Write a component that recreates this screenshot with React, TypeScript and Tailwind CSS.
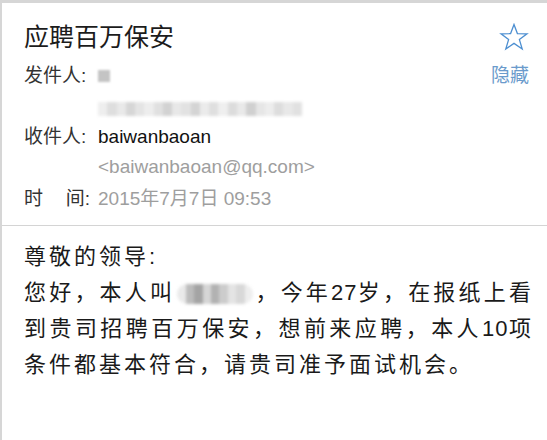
import React from 'react';

const cjk = "font-['Liberation_Sans','Noto_Sans_CJK_SC',sans-serif]";

// 打码块：一串灰色小方块再整体模糊
function Mosaic({ cells, className }: { cells: string[]; className: string }) {
  return (
    <span className={`inline-flex overflow-hidden align-middle blur-[1.5px] ${className}`}>
      {cells.map((c, i) => <span key={i} className="h-full flex-1" style={{ backgroundColor: c }} />)}
    </span>
  );
}

function StarIcon() {
  return (
    <svg width="30" height="28" viewBox="0 0 30 28" fill="none" stroke="#4d8fd1" strokeWidth="1.3" strokeLinejoin="miter">
      <polygon points="15,1.5 18.4,10.6 28,10.8 20.4,16.6 23.2,26 15,20.4 6.8,26 9.6,16.6 2,10.8 11.6,10.6" />
    </svg>
  );
}

const emailCells = ['#eeeeee', '#dedede', '#e9e9e9', '#d6d6d6', '#e4e4e4', '#ededed', '#e0e0e0', '#d2d2d2', '#e8e8e8', '#e2e2e2', '#d4d4d4', '#ebebeb', '#dfdfdf', '#efefef', '#dcdcdc', '#e9e9e9', '#d0d0d0', '#e6e6e6', '#ededed', '#dddddd', '#e8e8e8', '#e1e1e1'];
const nameCells = ['#eaeaea', '#bcbcbc', '#a4a4a4', '#d6d6d6', '#b2b2b2', '#cccccc', '#e4e4e4', '#d8d8d8', '#eeeeee'];

const Num = ({ children }: { children: string }) => <span className="tracking-[1px]">{children}</span>;

export default function App() {
  return (
    <div className={`h-[440px] w-[547px] overflow-hidden border-l-2 border-t-[3px] border-[#d6d6d6] bg-white ${cjk}`}>
      {/* 邮件头 */}
      <div className="pl-[22px] pr-[18px] pt-[19px]">
        <div className="flex h-[30px] items-center justify-between">
          <h1 className="text-[25px] leading-[30px] text-[#1c1c1c]">应聘百万保安</h1>
          <StarIcon />
        </div>
        <div className="mt-[12px] flex h-[24px] items-center justify-between text-[19px] leading-[24px]">
          <div className="flex items-center">
            <span className="w-[74px] text-[#333]">发件人:</span>
            <span className="h-[12px] w-[12px] bg-[#c4c4c4] blur-[1px]" />
          </div>
          <span className="text-[#6b9bcc]">隐藏</span>
        </div>
        <div className="mt-[9px] flex h-[24px] items-center pl-[74px]">
          <Mosaic cells={emailCells} className="h-[14px] w-[204px]" />
        </div>
        <div className="mt-[4px] flex h-[24px] items-center text-[19px] leading-[24px]">
          <span className="w-[74px] text-[#333]">收件人:</span>
          <span className="text-[#111]">baiwanbaoan</span>
        </div>
        <div className="mt-[6px] h-[24px] pl-[74px] text-[19px] leading-[24px] text-[#9e9e9e]">&lt;baiwanbaoan@qq.com&gt;</div>
        <div className="mt-[8px] flex h-[24px] items-center text-[19px] leading-[24px]">
          <span className="flex w-[74px] justify-between pr-[8px] text-[#333]"><span>时</span><span>间:</span></span>
          <span className="text-[#9e9e9e]">2015年7月7日 09:53</span>
        </div>
      </div>

      <div className="mt-[14px] h-px bg-[#d4d4d4]" />

      {/* 正文 */}
      <div className="pl-[22px] pt-[13px] text-[22px] leading-[36px] tracking-[3px] text-[#1a1a1a]">
        <div className="whitespace-nowrap">尊敬的领导:</div>
        <div className="w-[510px] whitespace-nowrap text-justify [text-align-last:justify]">
          您好，本人叫<Mosaic cells={nameCells} className="mx-[2px] h-[20px] w-[76px] rounded-full" />，今年<Num>27</Num>岁，在报纸上看
        </div>
        <div className="w-[510px] whitespace-nowrap text-justify [text-align-last:justify]">到贵司招聘百万保安，想前来应聘，本人<Num>10</Num>项</div>
        <div className="whitespace-nowrap">条件都基本符合，请贵司准予面试机会。</div>
      </div>
    </div>
  );
}
